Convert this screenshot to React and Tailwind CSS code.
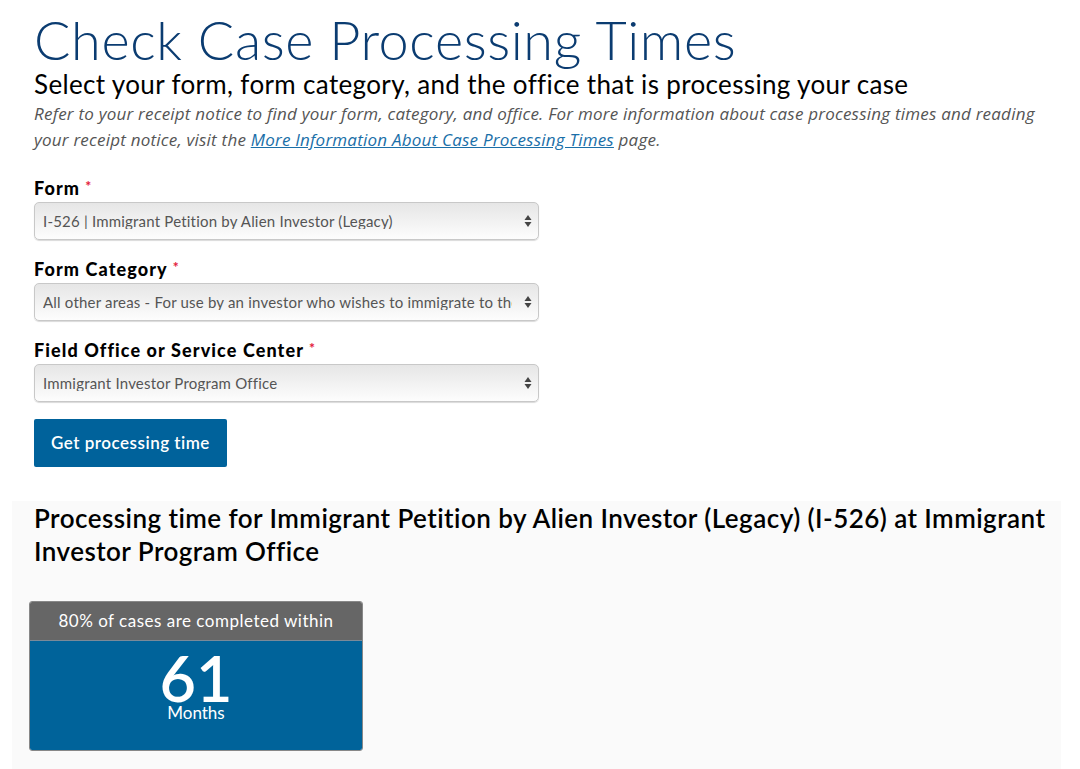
import React from "react";

function Arrows() {
  return (
    <svg width="8" height="14" viewBox="0 0 8 14" className="shrink-0">
      <path d="M4 1 L7.5 6 L0.5 6 Z" fill="#444" />
      <path d="M4 13 L7.5 8 L0.5 8 Z" fill="#444" />
    </svg>
  );
}

function Field({ label, value }) {
  return (
    <div className="flex flex-col">
      <div className="h-[24px] flex items-center text-[18px] font-black text-black tracking-[1.1px]">
        {label}
        <span className="text-[#e31c3d] ml-[5px] text-[14px] -mt-[6px]">*</span>
      </div>
      <div className="mt-[2px] w-[505px] h-[38px] rounded-[5px] border border-[#c8c8c8] bg-gradient-to-b from-[#e6e6e6] to-[#fdfdfd] shadow-[0_1px_1px_rgba(0,0,0,0.15)] flex items-center pl-[8px] pr-[6px]">
        <span className="flex-1 text-[15px] text-[#555] leading-none mr-[12px] overflow-hidden whitespace-nowrap tracking-[0.2px]">{value}</span>
        <Arrows />
      </div>
    </div>
  );
}

export default function App() {
  return (
    <div className="bg-white w-[1080px] h-[769px] overflow-hidden" style={{ fontFamily: "Lato, 'Open Sans', sans-serif" }}>
      <div className="pl-[34px] pt-[9px]">
        <h1 className="text-[54px] leading-[62px] font-light text-[#0b3c71] tracking-[0.6px]">Check Case Processing Times</h1>
        <h2 className="text-[26px] leading-[30px] text-black -mt-[2px] tracking-[0.35px]">Select your form, form category, and the office that is processing your case</h2>
        <p className="mt-[2px] italic text-[17px] leading-[26px] text-[#555] pr-[18px] tracking-[0.22px]" style={{ fontFamily: "'Open Sans', sans-serif" }}>
          Refer to your receipt notice to find your form, category, and office. For more information about case processing times and reading your receipt notice, visit the{" "}
          <a className="text-[#1a6fa8] underline">More Information About Case Processing Times</a> page.
        </p>
        <div className="mt-[23px] flex flex-col gap-[17px]">
          <Field label="Form" value="I-526 | Immigrant Petition by Alien Investor (Legacy)" />
          <Field label="Form Category" value="All other areas - For use by an investor who wishes to immigrate to the United States" />
          <Field label="Field Office or Service Center" value="Immigrant Investor Program Office" />
        </div>
        <button className="mt-[17px] w-[193px] h-[48px] bg-[#00629b] rounded-[2px] text-white text-[17px] font-semibold tracking-[0.5px]">
          Get processing time
        </button>
      </div>
      <div className="ml-[12px] mt-[34px] w-[1049px] h-[300px] bg-[#fafafa] pt-[1px]">
        <h3 className="pl-[22px] pr-[10px] text-[26px] leading-[33px] font-semibold text-black tracking-[0.45px]">
          Processing time for Immigrant Petition by Alien Investor (Legacy) (I-526) at Immigrant Investor Program Office
        </h3>
        <div className="ml-[17px] mt-[33px] w-[334px] h-[150px] rounded-[3px] border border-[#888] overflow-hidden flex flex-col">
          <div className="h-[39px] bg-[#666] text-white text-[17px] flex items-center justify-center border-b border-[#7a8a99] tracking-[0.5px]">
            80% of cases are completed within
          </div>
          <div className="flex-1 bg-[#00639a] text-white flex flex-col items-center pt-[12px]">
            <div className="text-[63px] leading-[50px] font-semibold">61</div>
            <div className="text-[17px] leading-[18px] mt-[1px]">Months</div>
          </div>
        </div>
      </div>
    </div>
  );
}
